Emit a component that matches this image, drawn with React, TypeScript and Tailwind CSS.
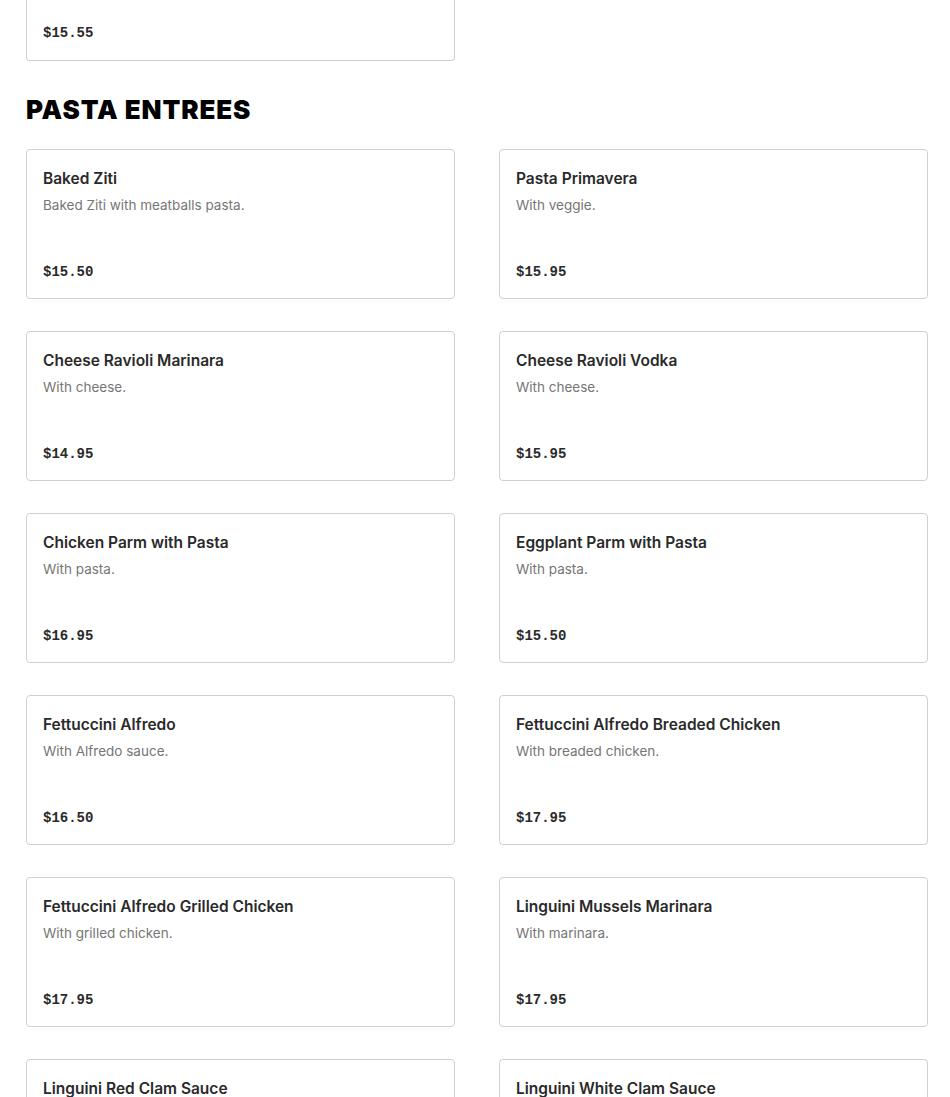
import React from 'react'

interface MenuItem {
  name: string
  description: string
  price: string
}

const pastaEntrees: MenuItem[] = [
  { name: 'Baked Ziti', description: 'Baked Ziti with meatballs pasta.', price: '$15.50' },
  { name: 'Pasta Primavera', description: 'With veggie.', price: '$15.95' },
  { name: 'Cheese Ravioli Marinara', description: 'With cheese.', price: '$14.95' },
  { name: 'Cheese Ravioli Vodka', description: 'With cheese.', price: '$15.95' },
  { name: 'Chicken Parm with Pasta', description: 'With pasta.', price: '$16.95' },
  { name: 'Eggplant Parm with Pasta', description: 'With pasta.', price: '$15.50' },
  { name: 'Fettuccini Alfredo', description: 'With Alfredo sauce.', price: '$16.50' },
  { name: 'Fettuccini Alfredo Breaded Chicken', description: 'With breaded chicken.', price: '$17.95' },
  { name: 'Fettuccini Alfredo Grilled Chicken', description: 'With grilled chicken.', price: '$17.95' },
  { name: 'Linguini Mussels Marinara', description: 'With marinara.', price: '$17.95' },
  { name: 'Linguini Red Clam Sauce', description: 'With red clam sauce.', price: '$17.95' },
  { name: 'Linguini White Clam Sauce', description: 'With white clam sauce.', price: '$17.95' },
]

const MenuCard: React.FC<{ item: MenuItem }> = ({ item }) => (
  <div className="h-[150px] border border-[#d0d0d0] rounded-[4px] bg-white px-4 pt-[17px] pb-4 flex flex-col">
    <h3 className="text-[15.5px] leading-6 font-semibold text-[#2a2a2a]">{item.name}</h3>
    <p className="mt-[2px] text-[13.5px] leading-6 text-[#767676]">{item.description}</p>
    <div className="mt-auto text-[14px] leading-5 font-bold text-[#2a2a2a] font-['Liberation_Mono',monospace]">
      {item.price}
    </div>
  </div>
)

export default function App() {
  return (
    <div className="min-h-screen bg-white font-['Inter',sans-serif] pl-[26px] pr-[22px]">
      {/* tail of the previous section */}
      <div className="grid grid-cols-2 gap-x-[44px]">
        <div className="h-[61px] border border-t-0 border-[#d0d0d0] rounded-b-[4px] px-4 pt-[23px]">
          <div className="text-[14px] leading-5 font-bold text-[#2a2a2a] font-['Liberation_Mono',monospace]">
            $15.55
          </div>
        </div>
      </div>

      <h2 className="mt-[33px] mb-[23px] text-[26px] leading-8 font-black tracking-[0.9px] text-black uppercase">
        Pasta Entrees
      </h2>

      <div className="grid grid-cols-2 gap-x-[44px] gap-y-[32px]">
        {pastaEntrees.map((item) => (
          <MenuCard key={item.name} item={item} />
        ))}
      </div>
    </div>
  )
}
